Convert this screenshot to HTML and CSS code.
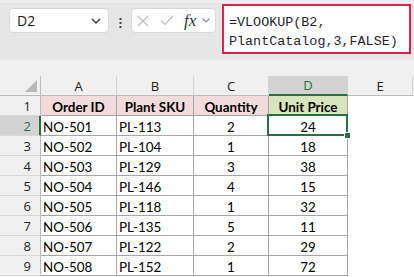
FILE: index.html
```html
<!DOCTYPE html>
<html lang="en">
<head>
    <meta charset="UTF-8">
    <title>VLOOKUP Unit Price</title>
    <link rel="stylesheet" href="styles.css">
</head>
<body>
    <div class="toolbar">
        <div class="namebox">
            <span>D2</span>
            <svg width="10" height="6" viewBox="0 0 10 6"><polyline points="1,1 5,5 9,1" fill="none" stroke="#333" stroke-width="1.3"/></svg>
        </div>
        <svg class="dots" width="3" height="10" viewBox="0 0 3 10">
            <rect x="0.5" y="0" width="2" height="2" fill="#444"/>
            <rect x="0.5" y="4" width="2" height="2" fill="#444"/>
            <rect x="0.5" y="8" width="2" height="2" fill="#444"/>
        </svg>
        <div class="controls">
            <svg width="12" height="12" viewBox="0 0 12 12"><path d="M1 1L11 11M11 1L1 11" stroke="#bdbdbd" stroke-width="1.2"/></svg>
            <svg width="14" height="11" viewBox="0 0 14 11"><polyline points="1,5.5 5,9.5 13,1" fill="none" stroke="#bdbdbd" stroke-width="1.2"/></svg>
            <span class="fx">fx</span>
            <svg width="8" height="5" viewBox="0 0 8 5"><polyline points="0.5,0.5 4,4 7.5,0.5" fill="none" stroke="#888" stroke-width="1.1"/></svg>
        </div>
        <div class="formula">=VLOOKUP(B2,<br>PlantCatalog,3,FALSE)</div>
    </div>

    <div class="sheet">
        <div class="grid">
            <div class="colhead corner"><span class="tri"></span></div>
            <div class="colhead">A</div>
            <div class="colhead">B</div>
            <div class="colhead">C</div>
            <div class="colhead active">D</div>
            <div class="colhead">E</div>
            <div class="colhead rest"></div>

            <div class="rowhead">1</div>
            <div class="cell title pink">Order ID</div>
            <div class="cell title pink">Plant SKU</div>
            <div class="cell title pink">Quantity</div>
            <div class="cell title green">Unit Price</div>
            <div class="empty"></div>
            <div class="empty"></div>

            <div class="rowhead active">2</div>
            <div class="cell">NO-501</div>
            <div class="cell">PL-113</div>
            <div class="cell num">2</div>
            <div class="cell num selected">24</div>
            <div class="empty"></div>
            <div class="empty"></div>

            <div class="rowhead">3</div>
            <div class="cell">NO-502</div>
            <div class="cell">PL-104</div>
            <div class="cell num">1</div>
            <div class="cell num">18</div>
            <div class="empty"></div>
            <div class="empty"></div>

            <div class="rowhead">4</div>
            <div class="cell">NO-503</div>
            <div class="cell">PL-129</div>
            <div class="cell num">3</div>
            <div class="cell num">38</div>
            <div class="empty"></div>
            <div class="empty"></div>

            <div class="rowhead">5</div>
            <div class="cell">NO-504</div>
            <div class="cell">PL-146</div>
            <div class="cell num">4</div>
            <div class="cell num">15</div>
            <div class="empty"></div>
            <div class="empty"></div>

            <div class="rowhead">6</div>
            <div class="cell">NO-505</div>
            <div class="cell">PL-118</div>
            <div class="cell num">1</div>
            <div class="cell num">32</div>
            <div class="empty"></div>
            <div class="empty"></div>

            <div class="rowhead">7</div>
            <div class="cell">NO-506</div>
            <div class="cell">PL-135</div>
            <div class="cell num">5</div>
            <div class="cell num">11</div>
            <div class="empty"></div>
            <div class="empty"></div>

            <div class="rowhead">8</div>
            <div class="cell">NO-507</div>
            <div class="cell">PL-122</div>
            <div class="cell num">2</div>
            <div class="cell num">29</div>
            <div class="empty"></div>
            <div class="empty"></div>

            <div class="rowhead">9</div>
            <div class="cell">NO-508</div>
            <div class="cell">PL-152</div>
            <div class="cell num">1</div>
            <div class="cell num">72</div>
            <div class="empty"></div>
            <div class="empty"></div>
        </div>
    </div>
</body>
</html>
```

FILE: styles.css
```css
body {
    margin: 0;
    background-color: #ffffff;
    font-family: "Open Sans", "Noto Sans", sans-serif;
    overflow: hidden;
}
.toolbar {
    display: flex;
    align-items: flex-start;
    height: 60px;
    background-color: #e6e6e6;
    box-sizing: border-box;
    border-top: 3px solid #ededed;
}
.namebox {
    display: flex;
    align-items: center;
    justify-content: space-between;
    box-sizing: border-box;
    width: 100px;
    height: 25px;
    margin: 5px 0 0 9px;
    padding: 0 7px 0 7px;
    background: white;
    border: 1px solid #d9d9d9;
    border-radius: 4px;
    font-size: 14px;
    color: #222;
}
.dots {
    margin: 15px 0 0 10px;
}
.controls {
    display: flex;
    align-items: center;
    box-sizing: border-box;
    width: 85px;
    height: 25px;
    margin: 5px 0 0 9px;
    padding-left: 5px;
    background: white;
    border: 1px solid #d9d9d9;
    border-radius: 4px;
}
.controls svg:nth-child(2) {
    margin-left: 11px;
}
.fx {
    margin-left: 10px;
    font-family: "Liberation Serif", serif;
    font-style: italic;
    font-size: 17px;
    color: #333;
    line-height: 1;
}
.controls svg:last-child {
    margin-left: 6px;
}
.formula {
    box-sizing: border-box;
    width: 189px;
    height: 50px;
    margin: 1px 0 0 6px;
    padding: 7px 0 0 5px;
    background: white;
    border: 2.5px solid #e01e4f;
    font-family: "Liberation Mono", monospace;
    font-size: 13.4px;
    line-height: 19px;
    color: #1f1f2f;
}
.sheet {
    background-color: #f0f0f0;
    padding-top: 16px;
}
.grid {
    display: grid;
    grid-template-columns: 41px 76px 77px 75px 79px 65px 1fr;
    grid-auto-rows: 20px;
    background: white;
}
.grid > div {
    box-sizing: border-box;
    border-right: 1px solid #a6a6a6;
    border-bottom: 1px solid #a6a6a6;
    display: flex;
    align-items: center;
}
.colhead {
    background-color: #f0f0f0;
    justify-content: center;
    font-size: 13px;
    color: #222;
    border-right-color: #d2d2d2 !important;
    border-bottom-color: #bcbcbc !important;
}
.colhead.active {
    background-color: #d3d3d3;
    color: #217346;
    border-bottom: 2px solid #217346 !important;
}
.corner {
    position: relative;
    border-right-color: #bcbcbc !important;
}
.tri {
    position: absolute;
    right: 3px;
    bottom: 3px;
    width: 0;
    height: 0;
    border-left: 12px solid transparent;
    border-bottom: 12px solid #b8b8b8;
}
.rowhead {
    background-color: #f0f0f0;
    justify-content: flex-end;
    padding-right: 9px;
    font-size: 13px;
    color: #222;
    border-right-color: #bcbcbc !important;
    border-bottom-color: #d8d8d8 !important;
}
.rowhead.active {
    background-color: #d3d3d3;
    color: #217346;
    border-right: 2px solid #217346 !important;
    padding-right: 8px;
}
.cell {
    font-family: Lato, "Liberation Sans", sans-serif;
    font-size: 13.4px;
    color: #000;
    padding: 2px 0 0 2px;
}
.cell.title {
    justify-content: center;
    font-weight: bold;
    padding-left: 0;
}
.pink {
    background-color: #f2dcdb;
}
.green {
    background-color: #d8e4bc;
}
.cell.num {
    justify-content: center;
    padding-left: 0;
}
.selected {
    position: relative;
}
.selected::after {
    content: "";
    position: absolute;
    left: -2px;
    top: -2px;
    right: -1px;
    bottom: -1px;
    border: 2px solid #217346;
}
.selected::before {
    content: "";
    position: absolute;
    right: -4px;
    bottom: -4px;
    width: 5px;
    height: 5px;
    background: #217346;
    border: 1px solid white;
    z-index: 1;
}
.empty {
    border-color: white !important;
}
.rest {
    border-right-color: #f0f0f0 !important;
}
```
